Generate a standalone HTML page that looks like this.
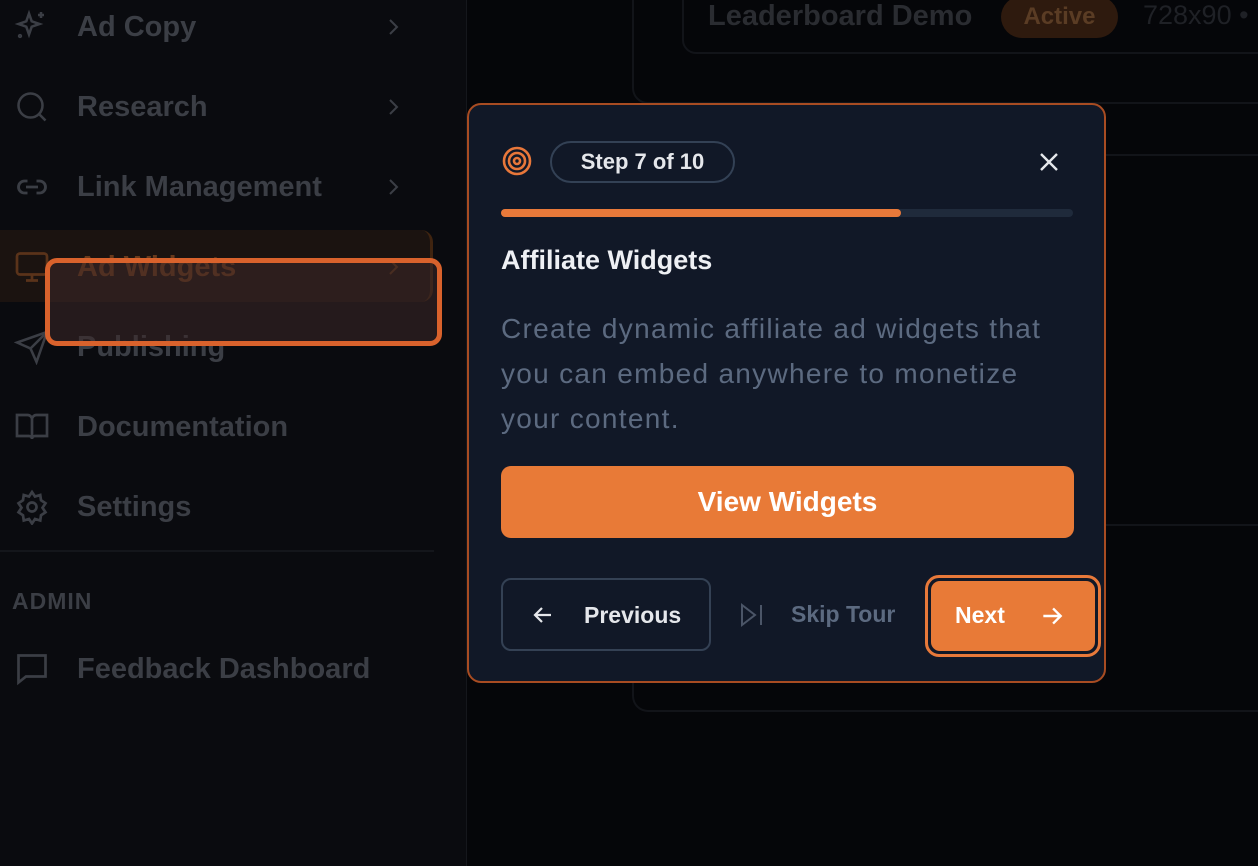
<!DOCTYPE html>
<html><head><meta charset="utf-8"><style>
*{box-sizing:border-box;margin:0;padding:0}
body{width:1258px;height:866px;overflow:hidden;background:#050609;font-family:"Liberation Sans",sans-serif;position:relative}
.side{position:absolute;left:0;top:0;width:467px;height:866px;background:#0a0b0f;border-right:1px solid #15171c}
.item{position:absolute;left:0;height:70px;width:434px;display:flex;align-items:center;color:#3b3e45;font-size:29px;font-weight:bold}
.item svg.ic{position:absolute;left:14px;width:36px;height:36px}
.item span{position:absolute;left:77px}
.item .chev{position:absolute;left:384px;width:20px;height:24px}
.abs{position:absolute}
</style></head><body>
<div class="side">
 <div class="item" style="top:-8px"><svg class="ic" viewBox="0 0 24 24" fill="none" stroke="#3b3e45" stroke-width="1.7"><path d="M10 3l1.8 5.2L17 10l-5.2 1.8L10 17l-1.8-5.2L3 10l5.2-1.8z"/><path d="M18 2v4M16 4h4"/><circle cx="4" cy="18" r=".6"/></svg><span>Ad Copy</span><svg class="chev" viewBox="0 0 20 24" fill="none" stroke="#3b3e45" stroke-width="2"><path d="M6 5l7 7-7 7"/></svg></div>
 <div class="item" style="top:72px"><svg class="ic" viewBox="0 0 24 24" fill="none" stroke="#3b3e45" stroke-width="1.7"><circle cx="11" cy="11" r="8"/><path d="M17 17l4 4"/></svg><span>Research</span><svg class="chev" viewBox="0 0 20 24" fill="none" stroke="#3b3e45" stroke-width="2"><path d="M6 5l7 7-7 7"/></svg></div>
 <div class="item" style="top:152px"><svg class="ic" viewBox="0 0 24 24" fill="none" stroke="#3b3e45" stroke-width="1.9"><path d="M9 8H7a4 4 0 000 8h2M15 8h2a4 4 0 010 8h-2M8 12h8"/></svg><span>Link Management</span><svg class="chev" viewBox="0 0 20 24" fill="none" stroke="#3b3e45" stroke-width="2"><path d="M6 5l7 7-7 7"/></svg></div>
 <div class="abs" style="left:0;top:230px;width:433px;height:72px;background:#1b1310;border-radius:0 12px 12px 0;border-right:3px solid #3f2410"></div>
 <div class="item" style="top:232px;color:#6a3a1c"><svg class="ic" viewBox="0 0 24 24" fill="none" stroke="#5a331a" stroke-width="1.8"><rect x="2" y="3" width="20" height="14" rx="2"/><path d="M8 21h8M12 17v4"/></svg><span>Ad Widgets</span><svg class="chev" viewBox="0 0 20 24" fill="none" stroke="#5a331a" stroke-width="2"><path d="M6 5l7 7-7 7"/></svg></div>
 <div class="item" style="top:312px"><svg class="ic" viewBox="0 0 24 24" fill="none" stroke="#3b3e45" stroke-width="1.7"><path d="M22 2L11 13M22 2l-7 20-4-9-9-4z"/></svg><span>Publishing</span></div>
 <div class="abs" style="left:45px;top:258px;width:397px;height:88px;border:5px solid #d9622c;border-radius:12px;background:rgba(60,40,40,.55)"></div>
 <div class="item" style="top:392px"><svg class="ic" viewBox="0 0 24 24" fill="none" stroke="#3b3e45" stroke-width="1.8"><path d="M2 4h7a3 3 0 013 3v13a2 2 0 00-2-2H2zM22 4h-7a3 3 0 00-3 3v13a2 2 0 012-2h8z"/></svg><span>Documentation</span></div>
 <div class="item" style="top:472px"><svg class="ic" viewBox="0 0 24 24" fill="none" stroke="#3b3e45" stroke-width="1.8"><circle cx="12" cy="12" r="3"/><path d="M12 2l2 3 3.5-1 .5 3.5 3 2-2 3 2 3-3 2-.5 3.5-3.5-1-2 3-2-3-3.5 1-.5-3.5-3-2 2-3-2-3 3-2 .5-3.5 3.5 1z"/></svg><span>Settings</span></div>
 <div class="abs" style="left:0;top:550px;width:434px;height:2px;background:#14161b"></div>
 <div class="abs" style="left:12px;top:588px;font-size:23px;font-weight:bold;color:#3b3e45;letter-spacing:1px">ADMIN</div>
 <div class="item" style="top:634px"><svg class="ic" viewBox="0 0 24 24" fill="none" stroke="#3b3e45" stroke-width="1.8"><path d="M3 3h18v14H8l-5 4z"/><path d="M8 10h.01M12 10h.01M16 10h.01"/></svg><span>Feedback Dashboard</span></div>
</div>
<!-- main bg -->
<div class="abs" style="left:632px;top:-30px;width:700px;height:134px;border:2px solid #121419;border-radius:16px"></div>
<div class="abs" style="left:682px;top:-30px;width:620px;height:84px;border:2px solid #121419;border-radius:14px"></div>
<div class="abs" style="left:708px;top:0;font-size:29px;font-weight:bold;color:#2a2c31">Leaderboard Demo</div>
<div class="abs" style="left:1001px;top:-4px;width:117px;height:42px;border-radius:21px;background:#2e1a0e;color:#5a3c24;font-size:24px;font-weight:bold;text-align:center;line-height:42px">Active</div>
<div class="abs" style="left:1143px;top:0;font-size:27px;color:#1f2126">728x90 •</div>
<div class="abs" style="left:632px;top:154px;width:700px;height:2px;background:#121419"></div>
<div class="abs" style="left:632px;top:524px;width:700px;height:2px;background:#121419"></div>
<div class="abs" style="left:632px;top:580px;width:700px;height:132px;border:2px solid #121419;border-top:none;border-radius:0 0 0 16px"></div>
<!-- popup -->
<div class="abs" style="left:467px;top:103px;width:639px;height:580px;background:#111827;border:2px solid #a84c22;border-radius:14px">
 <svg class="abs" style="left:33px;top:41px" width="30" height="30" viewBox="0 0 30 30" fill="none" stroke="#e8773a" stroke-width="2.6"><circle cx="15" cy="15" r="13"/><circle cx="15" cy="15" r="8"/><circle cx="15" cy="15" r="3"/></svg>
 <div class="abs" style="left:81px;top:36px;width:185px;height:42px;border:2px solid #334155;border-radius:21px;color:#e5e7eb;font-size:22px;font-weight:bold;text-align:center;line-height:38px">Step 7 of 10</div>
 <svg class="abs" style="left:569px;top:46px" width="22" height="22" viewBox="0 0 22 22" stroke="#e5e7eb" stroke-width="2.4"><path d="M3 3l16 16M19 3L3 19"/></svg>
 <div class="abs" style="left:32px;top:104px;width:572px;height:8px;border-radius:4px;background:#1f2a3b"><div style="width:400px;height:8px;border-radius:4px;background:#e8793a"></div></div>
 <div class="abs" style="left:32px;top:140px;font-size:27px;font-weight:bold;color:#eef0f4">Affiliate Widgets</div>
 <div class="abs" style="left:32px;top:201px;width:565px;font-size:28px;letter-spacing:1.3px;line-height:45px;color:#5c6a80">Create dynamic affiliate ad widgets that you can embed anywhere to monetize your content.</div>
 <div class="abs" style="left:32px;top:361px;width:573px;height:72px;border-radius:10px;background:#e87a37;color:#fff;font-size:28px;font-weight:bold;text-align:center;line-height:72px">View Widgets</div>
 <div class="abs" style="left:32px;top:473px;width:210px;height:73px;border:2px solid #344154;border-radius:10px;color:#e5e7eb;font-size:23px;font-weight:bold">
  <svg class="abs" style="left:28px;top:23px" width="24" height="24" viewBox="0 0 24 24" fill="none" stroke="#e5e7eb" stroke-width="2.2"><path d="M20 12H4M11 5l-7 7 7 7"/></svg>
  <span class="abs" style="left:81px;top:22px">Previous</span></div>
 <svg class="abs" style="left:270px;top:497px" width="26" height="26" viewBox="0 0 26 26" fill="none" stroke="#4b5567" stroke-width="2"><path d="M3 3l13 10L3 23zM22 3v20"/></svg>
 <span class="abs" style="left:322px;top:496px;color:#5c6a80;font-size:23px;font-weight:bold">Skip Tour</span>
 <div class="abs" style="left:456px;top:470px;width:176px;height:82px;border:3px solid #e8793a;border-radius:14px;padding:3px">
  <div style="width:100%;height:100%;background:#e87a37;border-radius:9px;position:relative;color:#fff;font-size:23px;font-weight:bold">
   <span class="abs" style="left:24px;top:21px">Next</span>
   <svg class="abs" style="left:108px;top:22px" width="26" height="26" viewBox="0 0 24 24" fill="none" stroke="#fff" stroke-width="2.2"><path d="M4 12h16M13 5l7 7-7 7"/></svg>
  </div></div>
</div>
</body></html>
